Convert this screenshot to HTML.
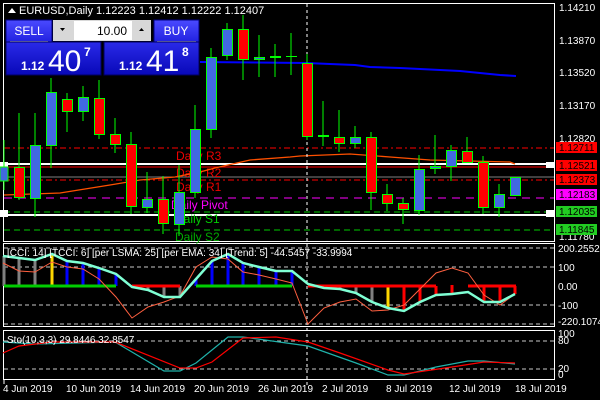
<!DOCTYPE html>
<html><head><meta charset="utf-8"><style>
body{margin:0;background:#000;width:600px;height:400px;overflow:hidden;font-family:"Liberation Sans",sans-serif}
svg{position:absolute;left:0;top:0}
</style></head><body>
<svg width="600" height="400" viewBox="0 0 600 400" xmlns="http://www.w3.org/2000/svg" font-family="Liberation Sans, sans-serif">
<rect width="600" height="400" fill="#000"/>
<!-- main panel border -->
<rect x="3.5" y="3.5" width="551" height="238" fill="none" stroke="#fff"/>
<rect x="3.5" y="243.5" width="551" height="83" fill="none" stroke="#fff"/>
<rect x="3.5" y="330.5" width="551" height="49" fill="none" stroke="#fff"/>
<!-- level lines -->
<line x1="4" y1="148" x2="554" y2="148" stroke="#f00" stroke-dasharray="6,3,2,3"/>
<rect x="4" y="163" width="550" height="2" fill="#fff"/>
<line x1="4" y1="167" x2="554" y2="167" stroke="#f00"/>
<line x1="4" y1="177" x2="554" y2="177" stroke="#808080"/>
<line x1="4" y1="180" x2="554" y2="180" stroke="#f00" stroke-dasharray="6,3,2,3"/>
<line x1="4" y1="198" x2="554" y2="198" stroke="#f0f" stroke-dasharray="8,6"/>
<line x1="4" y1="212" x2="554" y2="212" stroke="#0c0" stroke-dasharray="6,4"/>
<rect x="4" y="214" width="550" height="2" fill="#fff"/>
<line x1="4" y1="230" x2="554" y2="230" stroke="#0c0" stroke-dasharray="6,4"/>
<rect x="0" y="162" width="8" height="6" fill="#fff"/><rect x="0" y="210" width="8" height="7" fill="#fff"/>
<rect x="546" y="162" width="8" height="6" fill="#fff"/><rect x="546" y="210" width="8" height="7" fill="#fff"/>
<!-- pivot labels -->
<g font-size="12">
<text x="176" y="160" fill="#e00">Daily R3</text>
<text x="176" y="177" fill="#e00">Daily R2</text>
<text x="176" y="191" fill="#e00">Daily R1</text>
<text x="171" y="209" fill="#f0f">Daily Pivot</text>
<text x="175" y="223" fill="#0c0">Daily S1</text>
<text x="175" y="241" fill="#0a0">Daily S2</text>
</g>
<!-- MAs -->
<polyline fill="none" stroke="#ff5000" stroke-width="1.3" points="4,195 60,193 110,185 140,180 175,177 200,172 215,168 250,160 290,157 300,156 350,154 390,157 430,160 510,162 515,164"/>
<polyline fill="none" stroke="#00f" stroke-width="2" points="200,62 307,63 330,64 355,65 370,67 400,68 420,69 440,70 460,71 480,73 500,75 516,76"/>
<!-- vertical separator -->
<line x1="307" y1="4" x2="307" y2="385" stroke="#fff" stroke-dasharray="3,3"/>
<!-- candles -->
<g stroke="#0f0" stroke-width="1">
<line x1="4" y1="140" x2="4" y2="190"/><rect x="0" y="167" width="8" height="14" fill="#4169e1"/>
<line x1="19" y1="113" x2="19" y2="200"/><rect x="14.5" y="167.5" width="10" height="30" fill="#f00"/>
<line x1="35" y1="113" x2="35" y2="217"/><rect x="30.5" y="145.5" width="10" height="53" fill="#4169e1"/>
<line x1="51" y1="78" x2="51" y2="168"/><rect x="46.5" y="92.5" width="10" height="53" fill="#4169e1"/>
<line x1="67" y1="93" x2="67" y2="132"/><rect x="62.5" y="99.5" width="10" height="12" fill="#f00"/>
<line x1="83" y1="86" x2="83" y2="121"/><rect x="78.5" y="97.5" width="10" height="14" fill="#4169e1"/>
<line x1="99" y1="80" x2="99" y2="139"/><rect x="94.5" y="98.5" width="10" height="36" fill="#f00"/>
<line x1="115" y1="118" x2="115" y2="153"/><rect x="110.5" y="134.5" width="10" height="10" fill="#f00"/>
<line x1="131" y1="132" x2="131" y2="214"/><rect x="126.5" y="144.5" width="10" height="62" fill="#f00"/>
<line x1="147" y1="172" x2="147" y2="213"/><rect x="142.5" y="199.5" width="10" height="8" fill="#4169e1"/>
<line x1="163" y1="176" x2="163" y2="234"/><rect x="158.5" y="199.5" width="10" height="24" fill="#f00"/>
<line x1="179" y1="165" x2="179" y2="236"/><rect x="174.5" y="192.5" width="10" height="32" fill="#4169e1"/>
<line x1="195" y1="105" x2="195" y2="198"/><rect x="190.5" y="129.5" width="10" height="63" fill="#4169e1"/>
<line x1="211" y1="48" x2="211" y2="138"/><rect x="206.5" y="57.5" width="10" height="72" fill="#4169e1"/>
<line x1="227" y1="23" x2="227" y2="60"/><rect x="222.5" y="29.5" width="10" height="26" fill="#4169e1"/>
<line x1="243" y1="15" x2="243" y2="80"/><rect x="238.5" y="29.5" width="10" height="30" fill="#f00"/>
<line x1="259" y1="35" x2="259" y2="77"/><rect x="254.5" y="57.5" width="10" height="2" fill="#4169e1"/>
<line x1="275" y1="44" x2="275" y2="77"/><rect x="270" y="56" width="11" height="2" fill="#0f0" stroke="none"/>
<line x1="291" y1="33" x2="291" y2="75"/><line x1="286" y1="56.5" x2="297" y2="56.5"/>
<line x1="307" y1="54" x2="307" y2="140"/><rect x="302.5" y="63.5" width="10" height="73" fill="#f00"/>
<line x1="323" y1="101" x2="323" y2="146"/><rect x="318" y="135" width="11" height="2" fill="#0f0" stroke="none"/>
<line x1="339" y1="110" x2="339" y2="152"/><rect x="334.5" y="137.5" width="10" height="6" fill="#f00"/>
<line x1="355" y1="126" x2="355" y2="148"/><rect x="350.5" y="137.5" width="10" height="6" fill="#4169e1"/>
<line x1="371" y1="132" x2="371" y2="210"/><rect x="366.5" y="137.5" width="10" height="55" fill="#f00"/>
<line x1="387" y1="184" x2="387" y2="211"/><rect x="382.5" y="194.5" width="10" height="9" fill="#f00"/>
<line x1="403" y1="198" x2="403" y2="224"/><rect x="398.5" y="203.5" width="10" height="6" fill="#f00"/>
<line x1="419" y1="155" x2="419" y2="215"/><rect x="414.5" y="169.5" width="10" height="41" fill="#4169e1"/>
<line x1="435" y1="135" x2="435" y2="174"/><rect x="430.5" y="166.5" width="10" height="2" fill="#4169e1"/>
<line x1="451" y1="145" x2="451" y2="181"/><rect x="446.5" y="150.5" width="10" height="16" fill="#4169e1"/>
<line x1="467" y1="137" x2="467" y2="163"/><rect x="462.5" y="151.5" width="10" height="11" fill="#f00"/>
<line x1="483" y1="156" x2="483" y2="214"/><rect x="478.5" y="162.5" width="10" height="45" fill="#f00"/>
<line x1="499" y1="184" x2="499" y2="217"/><rect x="494.5" y="194.5" width="10" height="13" fill="#4169e1"/>
<rect x="510.5" y="177.5" width="10" height="18" fill="#4169e1"/>
</g>
<!-- price axis -->
<g font-size="10" fill="#fff">
<text x="559" y="11">1.14210</text>
<text x="559" y="44">1.13870</text>
<text x="559" y="76">1.13520</text>
<text x="559" y="109">1.13170</text>
<text x="559" y="142">1.12820</text>
<text x="559" y="240">1.11780</text>
</g>
<g font-size="10">
<rect x="556" y="142" width="41" height="11" fill="#f00"/><text x="559" y="151" fill="#000">1.12711</text>
<rect x="556" y="160" width="41" height="11" fill="#f00"/><text x="559" y="169" fill="#000">1.12521</text>
<rect x="556" y="174" width="41" height="11" fill="#f00"/><text x="559" y="183" fill="#000">1.12373</text>
<rect x="556" y="189" width="41" height="11" fill="#f0f"/><text x="559" y="198" fill="#000">1.12183</text>
<rect x="556" y="206" width="41" height="11" fill="#2c2"/><text x="559" y="215" fill="#000">1.12035</text>
<rect x="556" y="224" width="41" height="11" fill="#2c2"/><text x="559" y="233" fill="#000">1.11845</text>
</g>
<!-- CCI panel -->
<g stroke="#c8c8c8" stroke-dasharray="4,3">
<line x1="4" y1="248" x2="554" y2="248"/><line x1="4" y1="267" x2="554" y2="267"/>
<line x1="4" y1="305" x2="554" y2="305"/><line x1="4" y1="324" x2="554" y2="324"/>
<line x1="4" y1="341" x2="554" y2="341"/><line x1="4" y1="369" x2="554" y2="369"/>
</g>
<g stroke-width="3">
<line x1="4" y1="286" x2="4" y2="256" stroke="#808080"/>
<line x1="19" y1="286" x2="19" y2="258" stroke="#808080"/>
<line x1="35" y1="286" x2="35" y2="260" stroke="#808080"/>
<line x1="52" y1="286" x2="52" y2="254" stroke="#ffd700"/>
<line x1="67" y1="286" x2="67" y2="261" stroke="#00f"/>
<line x1="83" y1="286" x2="83" y2="263" stroke="#00f"/>
<line x1="99" y1="286" x2="99" y2="268" stroke="#00f"/>
<line x1="116" y1="286" x2="116" y2="274" stroke="#00f"/>
<line x1="148" y1="286" x2="148" y2="290" stroke="#808080"/>
<line x1="164" y1="286" x2="164" y2="297" stroke="#808080"/>
<line x1="180" y1="286" x2="180" y2="297" stroke="#808080"/>
<line x1="196" y1="286" x2="196" y2="279" stroke="#00f"/>
<line x1="212" y1="286" x2="212" y2="261" stroke="#00f"/>
<line x1="228" y1="286" x2="228" y2="254" stroke="#00f"/>
<line x1="243" y1="286" x2="243" y2="263" stroke="#00f"/>
<line x1="259" y1="286" x2="259" y2="267" stroke="#00f"/>
<line x1="276" y1="286" x2="276" y2="271" stroke="#00f"/>
<line x1="292" y1="286" x2="292" y2="271" stroke="#00f"/>
<line x1="340" y1="286" x2="340" y2="289" stroke="#808080"/>
<line x1="356" y1="286" x2="356" y2="293" stroke="#808080"/>
<line x1="372" y1="286" x2="372" y2="302" stroke="#808080"/>
<line x1="388" y1="286" x2="388" y2="308" stroke="#ffd700"/>
<line x1="404" y1="286" x2="404" y2="311" stroke="#f00"/>
<line x1="420" y1="286" x2="420" y2="302" stroke="#f00"/>
<line x1="436" y1="286" x2="436" y2="295" stroke="#f00"/>
<line x1="452" y1="285" x2="452" y2="293" stroke="#f00"/>
<line x1="484" y1="286" x2="484" y2="302" stroke="#f00"/>
<line x1="500" y1="286" x2="500" y2="302" stroke="#f00"/>
<line x1="515" y1="286" x2="515" y2="294" stroke="#f00"/>
<line x1="4" y1="286" x2="116" y2="286" stroke="#0c0"/>
<line x1="196" y1="286" x2="292" y2="286" stroke="#0c0"/>
<line x1="132" y1="286" x2="180" y2="286" stroke="#f00"/>
<line x1="308" y1="286" x2="436" y2="286" stroke="#f00"/>
<line x1="468" y1="286" x2="516" y2="286" stroke="#f00"/>
</g>
<polyline fill="none" stroke="#ff6040" stroke-width="1" points="3,263 19,271 35,272 52,262 67,267 83,269 99,279 116,297 132,318 148,307 164,302 180,296 196,267 212,257 228,259 243,272 259,275 276,279 292,283 308,324 324,308 340,302 356,299 372,311 388,310 404,305 420,289 436,273 452,268 468,273 484,295 500,305 515,294"/>
<polyline fill="none" stroke="#7fffd4" stroke-width="2.5" points="3,256 19,258 35,260 52,254 67,261 83,263 99,268 116,274 132,287 148,290 164,297 180,297 196,279 212,261 228,254 243,263 259,267 276,271 292,271 308,284 324,288 340,289 356,293 372,302 388,308 404,311 420,302 436,295 452,294 468,292 484,302 500,302 515,294"/>
<text x="7" y="256" font-size="10" fill="#fff">[CCI: 14] [TCCI: 6] [per LSMA: 25] [per EMA: 34] [Trend: 5]  -44.5457 -33.9994</text>
<g font-size="10" fill="#fff">
<text x="558" y="252">200.2552</text>
<text x="558" y="271">100</text>
<text x="558" y="290">0.00</text>
<text x="558" y="309">-100</text>
<text x="558" y="325">-220.1074</text>
<text x="558" y="337">100</text>
<text x="558" y="344">80</text>
<text x="558" y="372">20</text>
<text x="558" y="378">0</text>
</g>
<!-- Stoch -->
<polyline fill="none" stroke="#20b2aa" stroke-width="1.2" points="3,342 35,344 115,342 164,371 180,371 196,363 228,337 243,337 308,346 356,363 388,375 404,375 436,367 468,361 484,361 515,364"/>
<polyline fill="none" stroke="#f00" stroke-width="1.2" points="3,353 19,346 52,342 115,342 180,368 196,368 212,362 243,338 276,337 308,342 340,353 388,370 404,374 452,367 484,362 515,363"/>
<text x="7" y="343" font-size="10" fill="#fff">Sto(10,3,3) 29.8446 32.8547</text>
<!-- time axis -->
<g font-size="10" fill="#fff">
<text x="3" y="392">4 Jun 2019</text>
<text x="66" y="392">10 Jun 2019</text>
<text x="130" y="392">14 Jun 2019</text>
<text x="194" y="392">20 Jun 2019</text>
<text x="258" y="392">26 Jun 2019</text>
<text x="322" y="392">2 Jul 2019</text>
<text x="386" y="392">8 Jul 2019</text>
<text x="449" y="392">12 Jul 2019</text>
<text x="515" y="392">18 Jul 2019</text>
<line x1="4" y1="380" x2="4" y2="384" stroke="#fff"/>
</g>
<!-- title -->
<path d="M8 13 L12 8 L16 13 Z" fill="#fff"/>
<text x="19" y="14" font-size="11" fill="#fff">EURUSD,Daily  1.12223 1.12412 1.12222 1.12407</text>
<!-- trade panel -->
<defs>
<linearGradient id="b1" x1="0" y1="0" x2="0" y2="1"><stop offset="0" stop-color="#4a4aff"/><stop offset="1" stop-color="#2222e0"/></linearGradient>
<linearGradient id="b2" x1="0" y1="0" x2="0" y2="1"><stop offset="0" stop-color="#2a2ae8"/><stop offset="1" stop-color="#0808b8"/></linearGradient>
</defs>
<rect x="6" y="20" width="46" height="22" fill="url(#b1)" stroke="#000080"/>
<text x="29" y="35" font-size="12" fill="#fff" text-anchor="middle">SELL</text>
<line x1="10" y1="41.5" x2="48" y2="41.5" stroke="#aab"/>
<rect x="154" y="20" width="45" height="22" fill="url(#b1)" stroke="#000080"/>
<text x="176" y="35" font-size="12" fill="#fff" text-anchor="middle">BUY</text>
<line x1="157" y1="41.5" x2="196" y2="41.5" stroke="#aab"/>
<rect x="53" y="20" width="98" height="21" fill="#d8d8d8"/>
<rect x="74" y="21" width="58" height="19" fill="#fff"/>
<path d="M60 28 h5 l-2.5 3 z" fill="#000"/><path d="M139 31 h5 l-2.5 -3 z" fill="#000"/>
<text x="127" y="35" font-size="12" fill="#000" text-anchor="end">10.00</text>
<rect x="6" y="42" width="95" height="33" fill="url(#b2)" stroke="#000060"/>
<rect x="104" y="42" width="95" height="33" fill="url(#b2)" stroke="#000060"/>
<g fill="#fff">
<text x="21" y="70" font-size="12" font-weight="bold">1.12</text>
<text x="48" y="71" font-size="30">40</text>
<text x="84" y="56" font-size="12" font-weight="bold">7</text>
<text x="119" y="70" font-size="12" font-weight="bold">1.12</text>
<text x="146" y="71" font-size="30">41</text>
<text x="182" y="56" font-size="12" font-weight="bold">8</text>
</g>
</svg>
</body></html>
